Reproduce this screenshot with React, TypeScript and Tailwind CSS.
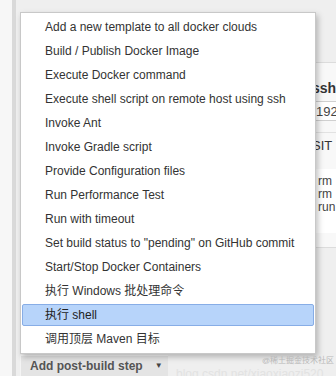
import React from "react";

const items = [
  "Add a new template to all docker clouds",
  "Build / Publish Docker Image",
  "Execute Docker command",
  "Execute shell script on remote host using ssh",
  "Invoke Ant",
  "Invoke Gradle script",
  "Provide Configuration files",
  "Run Performance Test",
  "Run with timeout",
  'Set build status to "pending" on GitHub commit',
  "Start/Stop Docker Containers",
  "执行 Windows 批处理命令",
  "执行 shell",
  "调用顶层 Maven 目标",
];

export default function App() {
  return (
    <div
      className="relative w-[336px] h-[376px] overflow-hidden bg-[#f6f6f6] flex text-[#333] whitespace-nowrap"
      style={{ fontFamily: '"Liberation Sans", "Noto Sans CJK SC", Arial, sans-serif' }}
    >
      <div className="w-[12px] shrink-0 bg-[#f7f7f7]" />
      <div className="w-[4px] shrink-0 bg-[#d9d9d9]" />
      <div className="flex-1 min-w-0 flex flex-col bg-[#efefef]">
        <div className="flex-1 flex min-w-0">
          <div className="w-[296px] shrink-0" />
          <div className="flex-1 min-w-0 overflow-hidden flex flex-col">
            <div className="h-[62px] shrink-0" />
            <div className="h-[186px] shrink-0 bg-[#f8f8f8] border-t border-b border-[#dcdcdc] flex flex-col">
              <div className="h-[38px] flex items-end pb-[6px] text-[14px] font-bold text-[#333] leading-none">ssh</div>
              <div className="h-[20px] bg-white border-t border-b border-[#d0d0d0] flex items-center text-[13px] leading-none pl-[4px] text-[#444]">
                192
              </div>
              <div className="h-[12px] border-b border-[#e2e2e2]" />
              <div className="h-[24px] flex items-center text-[13px] leading-none text-[#333]">SIT</div>
              <div className="flex-1 bg-white mt-[12px] mb-[14px] pt-[6px] pl-[6px] flex flex-col text-[12px] leading-[13px] text-[#444]">
                <span>rm</span>
                <span>rm</span>
                <span>run</span>
              </div>
            </div>
          </div>
        </div>
        <div className="h-[21px] shrink-0 flex items-start">
          <div className="ml-[4px] w-[148px] h-[21px] bg-[#e4e4e4] border-t border-l border-[#f4f4f4] flex items-center pl-[9px] gap-[12px] text-[12px] font-bold text-[#555] leading-none">
            <span>Add post-build step</span>
            <span className="text-[8px] text-[#444]">▼</span>
          </div>
        </div>
      </div>

      <div className="absolute left-[20px] top-[12px] w-[296px] bg-white border border-[#c8c8c8] shadow-[2px_3px_6px_rgba(0,0,0,0.25)] pt-[2px] pb-[2px]">
        {items.map((t) => {
          const active = t === "执行 shell";
          return (
            <div key={t} className="h-[24px] px-[1px] py-[1px]">
              <div
                className={
                  active
                    ? "h-[22px] flex items-center pl-[22px] text-[12px] leading-none text-[#222] bg-[#b7d4fa] border border-[#87ade6] rounded-[2px]"
                    : "h-[22px] flex items-center pl-[23px] text-[12px] leading-none text-[#333]"
                }
              >
                {t}
              </div>
            </div>
          );
        })}
      </div>

      <div className="absolute left-[262px] top-[357px] text-[8px] leading-none text-[#b8b8b8]">@稀土掘金技术社区</div>
      <div className="absolute left-[176px] top-[368px] text-[12px] leading-none text-[#e2e2e2]">blog.csdn.net/xiaoxiaozi520</div>
    </div>
  );
}
